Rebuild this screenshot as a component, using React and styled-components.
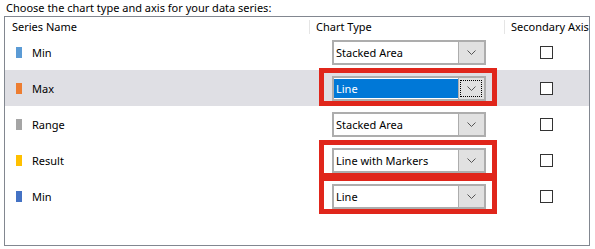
import React from 'react';
import styled, { createGlobalStyle } from 'styled-components';

const series = [
  { id: 1, name: 'Min', color: '#5b9bd5', type: 'Stacked Area' },
  { id: 2, name: 'Max', color: '#ed7d31', type: 'Line', active: true, marked: true },
  { id: 3, name: 'Range', color: '#a5a5a5', type: 'Stacked Area' },
  { id: 4, name: 'Result', color: '#ffc000', type: 'Line with Markers', marked: true },
  { id: 5, name: 'Min', color: '#4472c4', type: 'Line', marked: true },
];

const GlobalStyle = createGlobalStyle`
  body {
    margin: 0;
    background: #fff;
    font-family: "Segoe UI", "Noto Sans", sans-serif;
    font-size: 11px;
    color: #000;
  }
`;

const Chevron = () => (
  <svg width="9" height="5" viewBox="0 0 9 5">
    <path d="M0.5 0.5 L4.5 4.5 L8.5 0.5" fill="none" stroke="#555" strokeWidth="1" />
  </svg>
);

const App = () => {
  return (
    <>
      <GlobalStyle />
      <Page>
        <Title>Choose the chart type and axis for your data series:</Title>
        <Panel>
          <Header>
            <HeadCell>Series Name</HeadCell>
            <HeadCell divided>Chart Type</HeadCell>
            <HeadCell divided>Secondary Axis</HeadCell>
          </Header>
          {series.map(({ id, name, color, type, active, marked }) => (
            <Row key={id} active={active}>
              <NameCell>
                <Swatch color={color} />
                {name}
              </NameCell>
              <TypeCell>
                <Select>
                  <SelectText active={active}>
                    <span>{type}</span>
                  </SelectText>
                  <DropButton active={active}>
                    <Chevron />
                  </DropButton>
                  {marked && <Marker />}
                </Select>
              </TypeCell>
              <AxisCell>
                <Checkbox />
              </AxisCell>
            </Row>
          ))}
        </Panel>
      </Page>
    </>
  );
};

const Page = styled.div`
  width: 595px;
  height: 249px;
  padding: 0 0 0 4px;
  box-sizing: border-box;
`;

const Title = styled.div`
  height: 16px;
  line-height: 16px;
  padding-left: 2px;
`;

const Panel = styled.div`
  width: 586px;
  height: 230px;
  box-sizing: border-box;
  border: 1px solid #828790;
`;

const Header = styled.div`
  display: grid;
  grid-template-columns: 304px 195px 1fr;
  height: 17px;
`;

const HeadCell = styled.div`
  position: relative;
  padding-left: 7px;
  padding-top: 2px;
  line-height: 15px;
  white-space: nowrap;

  &::before {
    content: '';
    display: ${({ divided }) => (divided ? 'block' : 'none')};
    position: absolute;
    left: 0;
    top: 3px;
    bottom: 0;
    width: 1px;
    background: #e5e5e5;
  }
`;

const Row = styled.div`
  display: grid;
  grid-template-columns: 304px 195px 1fr;
  height: 36px;
  align-items: center;
  background: ${({ active }) => (active ? '#dfdfe4' : 'transparent')};
`;

const NameCell = styled.div`
  display: flex;
  align-items: center;
  gap: 10px;
  padding-left: 11px;
`;

const Swatch = styled.span`
  width: 6px;
  height: 11px;
  background: ${({ color }) => color};
`;

const TypeCell = styled.div`
  padding-left: 23px;
  display: flex;
  align-items: center;
`;

const Select = styled.div`
  position: relative;
  width: 154px;
  height: 25px;
  box-sizing: border-box;
  border: 2px solid #adadad;
  background: #fff;
  display: flex;
`;

const SelectText = styled.div`
  flex: 1;
  padding: 1px 0;
  display: flex;

  span {
    flex: 1;
    display: flex;
    align-items: center;
    padding-left: 2px;
    background: ${({ active }) => (active ? '#0078d7' : 'transparent')};
    color: ${({ active }) => (active ? '#fff' : '#000')};
  }
`;

const DropButton = styled.div`
  width: 26px;
  border-left: 1px solid #adadad;
  background: #e1e1e1;
  display: flex;
  align-items: center;
  justify-content: center;
  box-sizing: border-box;
  outline: ${({ active }) => (active ? '1px dotted #000' : 'none')};
  outline-offset: -3px;
`;

const Marker = styled.div`
  position: absolute;
  top: -10px;
  bottom: -7px;
  left: -15px;
  right: -13px;
  border: 5px solid #e0261b;
  pointer-events: none;
`;

const AxisCell = styled.div`
  display: flex;
  justify-content: center;
`;

const Checkbox = styled.span`
  width: 13px;
  height: 13px;
  box-sizing: border-box;
  border: 1px solid #333;
  background: #fff;
`;

export default App;
